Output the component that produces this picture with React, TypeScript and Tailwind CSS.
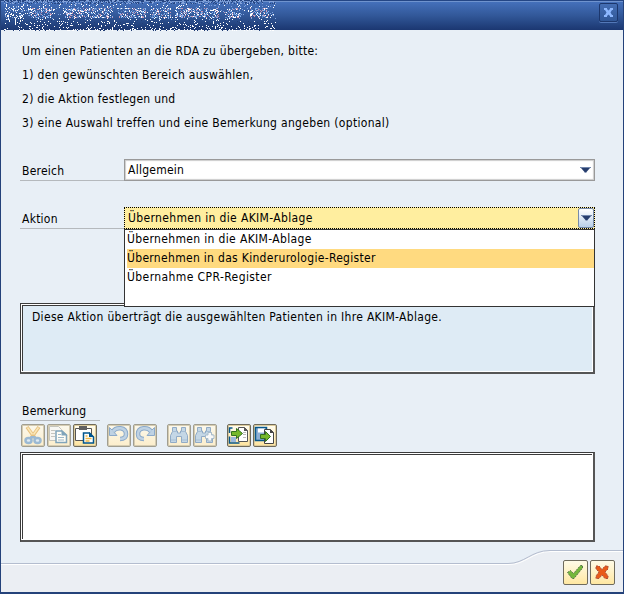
import React from "react";

const options = [
  { text: "Übernehmen in die AKIM-Ablage", spacing: "tracking-[0.35px]" },
  { text: "Übernehmen in das Kinderurologie-Register", spacing: "tracking-[0.31px]" },
  { text: "Übernahme CPR-Register", spacing: "tracking-[0.41px]" },
];

// Scrambled caption: the window title is made unreadable with pixel noise
const buildNoise = () => {
  let seed = 4711;
  const rand = () => {
    seed = (seed * 1664525 + 1013904223) % 4294967296;
    return seed / 4294967296;
  };
  const words = [[28, 51], [63, 112], [118, 145], [150, 170], [176, 218], [224, 240], [250, 268]];
  const layers: Record<string, string> = {};
  for (let y = 0; y < 31; y++) {
    for (let x = 4; x < 276; x++) {
      const inWord = y > 7 && y < 18 && words.some(([a, b]) => x >= a && x <= b);
      const inIcon = y > 5 && y < 22 && x < 25;
      const density = y < 4 ? 0.4 : inWord ? 0.5 : inIcon ? 0.3 : y > 28 ? 0.3 : y > 20 ? 0.15 : 0.09;
      const hit = rand() < density;
      const tone = rand();
      if (!hit) continue;
      let color = "#ffffff";
      if (y < 4) color = tone < 0.55 ? "#27457f" : "#86a5dc";
      else if (inWord) color = tone < 0.26 ? "#ffffff" : tone < 0.5 ? "#87b5f1" : tone < 0.7 ? "#c999b4" : "#6388c6";
      else if (tone > 0.65) color = y < 20 ? "#80a4df" : "#233f75";
      layers[color] = (layers[color] || "") + `M${x} ${y}h1v1h-1z`;
    }
  }
  return Object.entries(layers);
};

const noise = buildNoise();

const Arrow = () => (
  <svg width="11" height="6" viewBox="0 0 11 6">
    <path d="M0 0h11v1h-11z" fill="#7186ac" />
    <path d="M1 1h9l-3.500 4h-2z" fill="#263d6d" />
    <path d="M4.500 5h2v1h-2z" fill="#8494b4" />
  </svg>
);

const ToolButton = ({ children, active = false, label }: { children: React.ReactNode; active?: boolean; label: string }) => (
  <button
    aria-label={label}
    className={
      active
        ? "w-6 h-[23px] rounded-[2px] border border-[#6f6a5a] bg-linear-to-b from-[#fffdf2] to-[#ffe49b] shadow-[inset_0_0_0_1px_#dccb9c]"
        : "w-6 h-[23px] rounded-[2px] border border-[#a19e90] bg-linear-to-b from-[#fbf8ed] to-[#fceecb] shadow-[inset_0_0_0_1px_#d5ccb2]"
    }
  >
    <svg className="block -ml-px -mt-px" width="24" height="23" viewBox="0 0 24 23">
      {children}
    </svg>
  </button>
);

const Undo = () => (
  <>
    <path d="M6 7.500C9 2.500 19 3 19 10C19 13.500 17 15 13 15" fill="none" stroke="#8caaca" strokeWidth="4.500" />
    <path d="M2.500 3.500l3 3 4.500 5h-7.500z" fill="#bfd2e3" stroke="#8caaca" />
    <path d="M6 7.500C9 2.500 19 3 19 10C19 13.500 17 15 13 15" fill="none" stroke="#bfd2e3" strokeWidth="2.500" />
  </>
);

const Binoculars = () => (
  <>
    <path d="M5.500 3.500h4v3.500h1v2h3v-2h1v-3.500h4v4l2 4v7h-6v-6h-5v6h-6v-7l2-4z" fill="#c4d7e6" stroke="#91abc6" />
    <path d="M6 7.500h4M14 7.500h4M4 16h5M15 16h5" stroke="#a6bed4" />
  </>
);

const Label = ({ children }: { children: React.ReactNode }) => (
  <div className="w-[104px] h-[22px] pl-[2px] pt-px border-b border-[#b5b9bd] leading-[22px]">{children}</div>
);

export default function App() {
  return (
    <div className="w-[624px] h-[594px] flex flex-col overflow-hidden border border-t-0 border-[#24427a] border-b-2 bg-[#e8eff6] text-[12px] tracking-[0.25px] text-black [font-family:'DejaVu_Sans_Condensed','DejaVu_Sans',sans-serif] [font-stretch:75%]">
      <header className="relative h-[30px] shrink-0 flex justify-end border-t border-[#244685] bg-linear-to-b from-[#4672bd] via-[#325899] to-[#1b3771] shadow-[inset_0_1px_0_#6f93ce]">
        <svg className="absolute -left-px -top-px" width="276" height="31" shapeRendering="crispEdges">
          {noise.map(([color, d]) => (
            <path key={color} d={d} fill={color} />
          ))}
        </svg>
        <button aria-label="Schließen" className="mt-[2px] mr-[5px] w-[19px] h-[19px] flex items-center justify-center rounded-[2px] border border-[#1c376d] bg-linear-to-b from-[#446eb4] to-[#315898] shadow-[0_1px_0_#5378b8]">
          <svg width="9" height="9" viewBox="0 0 9 9" fill="#8db8ff">
            <path d="M0 0h3v1l1.500 1.500L6 1V0h3v2H8L6.500 4.500L8 7h1v2H6V8L4.500 6.500L3 8v1H0V7h1l1.500-2.500L1 2H0z" />
          </svg>
        </button>
      </header>

      <main className="h-[513px] shrink-0 pl-[19px] pt-[9px]">
        <div className="pl-[2px] leading-6">
          <p className="tracking-[0.27px]">Um einen Patienten an die RDA zu übergeben, bitte:</p>
          <p className="tracking-[0.33px]">1) den gewünschten Bereich auswählen,</p>
          <p className="tracking-[0.26px]">2) die Aktion festlegen und</p>
          <p className="tracking-[0.32px]">3) eine Auswahl treffen und eine Bemerkung angeben (optional)</p>
        </div>

        <div className="mt-6 flex">
          <Label>Bereich</Label>
          <div className="w-[471px] h-[22px] flex items-center justify-between border border-[#999999] bg-white pl-[3px] pr-[3px] shadow-[inset_0_0_1px_1px_#ccc]">
            <span>Allgemein</span>
            <Arrow />
          </div>
        </div>

        <div className="mt-[26px] flex">
          <Label>Aktion</Label>
          <div className="relative w-[471px] h-[22px] flex justify-between border border-dotted border-black bg-[#ffee9f] pl-[3px]">
            <span className="leading-5 tracking-[0.35px]">{options[0].text}</span>
            <span className="w-4 h-5 flex items-center justify-center rounded-[2px] border border-[#768baa] bg-linear-to-b from-white to-[#b9cfe8]">
              <Arrow />
            </span>
            <ul className="absolute z-10 -left-px top-[21px] w-[471px] h-[78px] pl-[2px] border border-[#333] bg-white leading-[19px]">
              {options.map((option, i) => (
                <li key={option.text} className={i === 1 ? "h-[19px] bg-[#ffda80]" : "h-[19px]"}>
                  <span className={option.spacing}>{option.text}</span>
                </li>
              ))}
            </ul>
          </div>
        </div>

        <div className="mt-[74px] w-[575px] h-[71px] border border-b-2 border-r-2 border-[#3b3b3b] border-b-[#555] border-r-[#555] bg-white p-px">
          <div className="h-full border-l border-t border-[#3b3b3b] bg-[#deebf5] pl-[9px] pt-[2px] leading-[18px] tracking-[0.31px]">
            Diese Aktion überträgt die ausgewählten Patienten in Ihre AKIM-Ablage.
          </div>
        </div>

        <div className="mt-[27px] w-20 h-5 pl-[2px] border-b border-[#b5b9bd] leading-5">Bemerkung</div>

        <div className="mt-[3px] ml-px flex gap-[10px]">
          <div className="flex gap-[2px]">
            <ToolButton label="Ausschneiden">
              <path d="M6 3l7.500 10.500M18 3l-7.500 10.500" stroke="#e7c17f" strokeWidth="3.500" />
              <path d="M6.500 3.500l5 7M17.500 3.500l-5 7" stroke="#fae7b9" strokeWidth="1.500" />
              <path d="M10 12h4l3 2-3 2-2-2-2 2-3-2z" fill="#9bb9d3" />
              <ellipse cx="7.500" cy="16.500" rx="3" ry="2.500" fill="#e0ebf2" stroke="#9bb9d3" strokeWidth="2.500" />
              <ellipse cx="16.500" cy="16.500" rx="3" ry="2.500" fill="#e0ebf2" stroke="#9bb9d3" strokeWidth="2.500" />
            </ToolButton>
            <ToolButton label="Kopieren">
              <path d="M2.500 2.500h9l3 3v11h-12z" fill="#f8f7f3" stroke="#c5c5bd" />
              <path d="M4 6.500h4M4 9.500h4M4 12.500h4" stroke="#c5c5bf" />
              <path d="M9 7h6l4.500 4v7.500h-10.500z" fill="#fffdf5" stroke="#7fa4ba" strokeWidth="1.500" />
              <path d="M14.500 6v5.500h6z" fill="#7fa4ba" />
              <path d="M11 10.500h3M11 13.500h6M11 16h6" stroke="#9eb9ca" />
            </ToolButton>
            <ToolButton active label="Einfügen">
              <path d="M2.500 4.500h16v12h-16z" fill="white" stroke="#555" />
              <path d="M6 2h8v4h-8z" fill="#606060" />
              <path d="M10.500 9h6l4 4v6h-10z" fill="white" stroke="#00558d" strokeWidth="1.500" />
              <path d="M16 8v5h5z" fill="#00558d" />
              <path d="M12.500 12h2M12.500 14.500h6M12.500 17h4" stroke="#ebb543" strokeWidth="1.500" />
            </ToolButton>
          </div>
          <div className="flex gap-[2px]">
            <ToolButton label="Rückgängig"><Undo /></ToolButton>
            <ToolButton label="Wiederholen"><g transform="translate(24 0) scale(-1 1)"><Undo /></g></ToolButton>
          </div>
          <div className="flex gap-[2px]">
            <ToolButton label="Suchen"><Binoculars /></ToolButton>
            <ToolButton label="Weitersuchen">
              <g transform="translate(-1 0)"><Binoculars /></g>
              <path d="M15 8.500h3.500v2.500h2.500v3.500h-2.500v2.500h-3.500v-2.500h-2.500v-3.500h2.500z" fill="#f7f8f8" stroke="#a9bccb" />
            </ToolButton>
          </div>
          <div className="flex gap-[2px]">
            <ToolButton active label="Laden">
              <path d="M11.500 3.500h6l3 3v11h-9z" fill="white" stroke="#555" />
              <path d="M17 3v4h4z" fill="#555" />
              <path d="M16 8.500h3M16 10.500h3M16 13.500h3" stroke="#bbb" />
              <path d="M2.500 9V4h3M2.500 12.500v6.500h10" fill="none" stroke="#07578b" strokeWidth="1.500" />
              <path d="M4 13h5v5h-5z" fill="#9ab7dc" />
              <path d="M4.500 7.500h5v-3l6 5-6 5v-3h-5z" fill="#76b82a" stroke="#337321" />
            </ToolButton>
            <ToolButton active label="Speichern">
              <path d="M2.500 3.500h11v13h-11z" fill="#8dafd4" stroke="#07578b" strokeWidth="1.500" />
              <path d="M5 4.500h7v4h-7z" fill="white" />
              <path d="M11.500 5.500h6l3 3v11h-9z" fill="white" stroke="#444" />
              <path d="M17 5v4h4z" fill="#444" />
              <path d="M7.500 10.500h5v-3l5 5-5 5v-3h-5z" fill="#76b82a" stroke="#337321" />
            </ToolButton>
          </div>
        </div>

        <div className="mt-[5px] w-[575px] h-[90px] border border-b-2 border-r-2 border-[#3b3b3b] border-b-[#555] border-r-[#555] bg-white p-px">
          <div className="h-full border-l border-t border-[#3b3b3b] bg-white" />
        </div>
      </main>

      <footer className="relative flex-1 flex justify-end pt-[17px] pr-2 gap-[2px]">
        <svg className="absolute left-0 top-0" width="622" height="50" viewBox="0 0 622 50">
          <path d="M0 20H507C524 20 530 7 549 7H622V50H0z" fill="#ebeef3" />
          <path d="M0 21.500H508C525 21.500 531 8.500 550 8.500H622" fill="none" stroke="white" />
          <path d="M0 20.500H507C524 20.500 530 7.500 549 7.500H622" fill="none" stroke="#b4bdcf" />
        </svg>
        <button aria-label="OK" className="relative w-[25px] h-[25px] rounded-[2px] border border-[#6f6b5d] bg-linear-to-b from-[#fffbe7] to-[#ffe7a1]">
          <svg width="23" height="23" viewBox="0 0 23 23">
            <path d="M3.500 11.500l3-2 3 3 7-8h2v2.500l-8.500 10.500h-2z" fill="#75b83b" stroke="#58764b" strokeDasharray="2 1" />
          </svg>
        </button>
        <button aria-label="Abbrechen" className="relative w-[25px] h-[25px] rounded-[2px] border border-[#6f6b5d] bg-linear-to-b from-[#fffbe7] to-[#ffe7a1]">
          <svg width="23" height="23" viewBox="0 0 23 23">
            <path d="M5 5h3l3 3.500 3-3.500h3v3l-3 3 3 4v2.500h-3l-3-3.500-3 3.500h-3v-2.500l3-4-3-3z" fill="#e85b19" stroke="#a85142" strokeDasharray="2 1" />
          </svg>
        </button>
      </footer>
    </div>
  );
}
